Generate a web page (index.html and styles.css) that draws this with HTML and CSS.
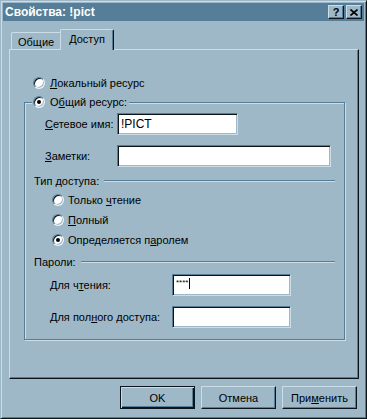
FILE: index.html
```html
<!DOCTYPE html>
<html lang="ru">
<head>
    <meta charset="UTF-8">
    <title>Свойства: !pict</title>
    <link rel="stylesheet" href="styles.css">
</head>
<body>
    <div class="window">
        <!-- Title bar -->
        <div class="titlebar">
            <span class="title">Свойства: !pict</span>
            <div class="title-buttons">
                <button class="tbtn">?</button>
                <button class="tbtn">
                    <svg width="8" height="7" viewBox="0 0 8 7"><path d="M0.5 0.5 L7.5 6.5 M7.5 0.5 L0.5 6.5" stroke="#000" stroke-width="1.6" fill="none"/></svg>
                </button>
            </div>
        </div>

        <div class="body">
            <div class="tabs">
                <div class="tab">Общие</div>
                <div class="tab active">Доступ</div>
            </div>

            <div class="panel">
                <div class="option top-option">
                    <span class="radio"></span>
                    <span><u>Л</u>окальный ресурс</span>
                </div>

                <div class="group">
                    <div class="group-legend option">
                        <span class="radio checked"></span>
                        <span>О<u>б</u>щий ресурс:</span>
                    </div>

                    <div class="field-row first">
                        <label class="field-label"><u>С</u>етевое имя:</label>
                        <div class="input short">!PICT</div>
                    </div>
                    <div class="field-row">
                        <label class="field-label"><u>З</u>аметки:</label>
                        <div class="input wide"></div>
                    </div>

                    <div class="separator">
                        <span>Тип доступа:</span>
                        <span class="etched"></span>
                    </div>
                    <div class="radio-list">
                        <div class="option"><span class="radio"></span><span>Только <u>ч</u>тение</span></div>
                        <div class="option"><span class="radio"></span><span><u>П</u>олный</span></div>
                        <div class="option"><span class="radio checked"></span><span>Определяется п<u>а</u>ролем</span></div>
                    </div>

                    <div class="separator passwords">
                        <span>Пароли:</span>
                        <span class="etched"></span>
                    </div>
                    <div class="field-row pass first">
                        <label class="field-label">Для ч<u>т</u>ения:</label>
                        <div class="input pass-input"><span class="stars">****</span><span class="caret"></span></div>
                    </div>
                    <div class="field-row pass">
                        <label class="field-label">Для пол<u>н</u>ого доступа:</label>
                        <div class="input pass-input"></div>
                    </div>
                </div>
            </div>

            <div class="actions">
                <button class="btn default">OK</button>
                <button class="btn">Отмена</button>
                <button class="btn">При<u>м</u>енить</button>
            </div>
        </div>
    </div>
</body>
</html>
```

FILE: styles.css
```css
body {
    margin: 0;
    padding: 0;
    background-color: #9eb8c7;
    font-family: "Liberation Sans", Arial, sans-serif;
    font-size: 11px;
    color: #000;
}

.window {
    width: 367px;
    height: 419px;
    box-sizing: border-box;
    border: 1px solid;
    border-color: #9eb8c7 #0b141a #0b141a #9eb8c7;
    box-shadow: inset 1px 1px 0 #cbdde7, inset -1px -1px 0 #587d96;
    padding: 2px;
    background-color: #9eb8c7;
}

.titlebar {
    height: 18px;
    background-color: #567e98;
    display: flex;
    align-items: center;
    justify-content: space-between;
    padding: 0 2px 0 2px;
}

.title {
    color: #fff;
    font-weight: bold;
    font-size: 12px;
}

.title-buttons {
    display: flex;
    gap: 2px;
}

.tbtn {
    width: 16px;
    height: 14px;
    padding: 0;
    margin: 0;
    box-sizing: border-box;
    border: 1px solid;
    border-color: #cbdde7 #0b141a #0b141a #cbdde7;
    box-shadow: inset -1px -1px 0 #587d96;
    background-color: #9eb8c7;
    font-family: "Liberation Sans", Arial, sans-serif;
    font-weight: bold;
    font-size: 11px;
    line-height: 11px;
    display: flex;
    align-items: center;
    justify-content: center;
}

.body {
    padding: 8px 5px 0 6px;
}

/* tabs */
.tabs {
    display: flex;
    align-items: flex-end;
    height: 20px;
    padding-left: 2px;
}

.tab {
    height: 17px;
    box-sizing: border-box;
    padding: 3px 7px 0 6px;
    border: 1px solid;
    border-bottom: none;
    border-color: #cbdde7 #0b141a #0b141a #cbdde7;
    border-radius: 2px 2px 0 0;
    box-shadow: inset -1px 0 0 #587d96;
    background-color: #9eb8c7;
}

.tab.active {
    height: 21px;
    margin: 0 -2px -1px -2px;
    padding: 3px 8px 0 8px;
    position: relative;
    z-index: 1;
}

.panel {
    height: 330px;
    box-sizing: border-box;
    border: 1px solid;
    border-color: #cbdde7 #0b141a #0b141a #cbdde7;
    box-shadow: inset -1px -1px 0 #587d96;
    padding-top: 25px;
}

/* radio options */
.option {
    display: flex;
    align-items: center;
    gap: 5px;
    height: 16px;
}

.top-option {
    margin-left: 23px;
}

.radio {
    width: 12px;
    height: 12px;
    box-sizing: border-box;
    border-radius: 50%;
    border: 1px solid;
    border-color: #587d96 #e6f0f5 #e6f0f5 #587d96;
    background-color: #fff;
    box-shadow: inset 1px 1px 0 #0b141a, inset -1px -1px 0 #9eb8c7;
    display: flex;
    align-items: center;
    justify-content: center;
    flex-shrink: 0;
}

.radio.checked::after {
    content: "";
    width: 4px;
    height: 4px;
    border-radius: 50%;
    background-color: #000;
}

/* group frame */
.group {
    margin: 11px 13px 0 14px;
    height: 238px;
    box-sizing: border-box;
    border: 1px solid #587d96;
    box-shadow: inset 1px 1px 0 #cbdde7, 1px 1px 0 #cbdde7;
}

.group-legend {
    margin-top: -9px;
    margin-left: 7px;
    padding: 0 2px 0 1px;
    width: max-content;
    background-color: #9eb8c7;
}

.field-row {
    display: flex;
    align-items: center;
    padding-left: 20px;
    margin-top: 10px;
}

.field-row.first {
    margin-top: 3px;
}

.field-label {
    width: 72px;
}

.field-row.pass {
    padding-left: 25px;
}

.field-row.pass .field-label {
    width: 122px;
}

.field-row.pass.first {
    margin-top: 5px;
}

.input {
    height: 22px;
    box-sizing: border-box;
    border: 1px solid;
    border-color: #587d96 #cbdde7 #cbdde7 #587d96;
    box-shadow: inset 1px 1px 0 #0b141a, inset -1px -1px 0 #9eb8c7;
    background-color: #fff;
    padding: 3px 0 0 3px;
    font-size: 12px;
    display: flex;
    align-items: flex-start;
}

.input.short {
    width: 121px;
}

.input.wide {
    width: 214px;
}

.input.pass-input {
    width: 119px;
}

.stars {
    font-size: 8px;
    line-height: 8px;
    margin-top: 1px;
}

.caret {
    width: 1px;
    height: 11px;
    background-color: #000;
    margin-left: 1px;
}

/* separators */
.separator {
    display: flex;
    align-items: center;
    gap: 5px;
    height: 14px;
    margin: 7px 9px 0 9px;
}

.separator.passwords {
    margin-top: 5px;
}

.etched {
    flex: 1;
    height: 1px;
    background-color: #587d96;
    border-bottom: 1px solid #cbdde7;
}

.radio-list {
    margin-top: 2px;
    padding-left: 27px;
}

.radio-list .option {
    height: 20px;
    gap: 4px;
}

/* dialog buttons */
.actions {
    display: flex;
    justify-content: flex-end;
    gap: 6px;
    margin-top: 7px;
    padding-right: 2px;
}

.btn {
    width: 75px;
    height: 23px;
    box-sizing: border-box;
    margin: 0;
    padding: 0;
    border: 1px solid;
    border-color: #cbdde7 #0b141a #0b141a #cbdde7;
    box-shadow: inset -1px -1px 0 #587d96;
    background-color: #9eb8c7;
    font-family: "Liberation Sans", Arial, sans-serif;
    font-size: 11px;
    color: #000;
}

.btn.default {
    border-color: #0b141a;
    box-shadow: inset 1px 1px 0 #cbdde7, inset -1px -1px 0 #0b141a, inset -2px -2px 0 #587d96;
}
```
